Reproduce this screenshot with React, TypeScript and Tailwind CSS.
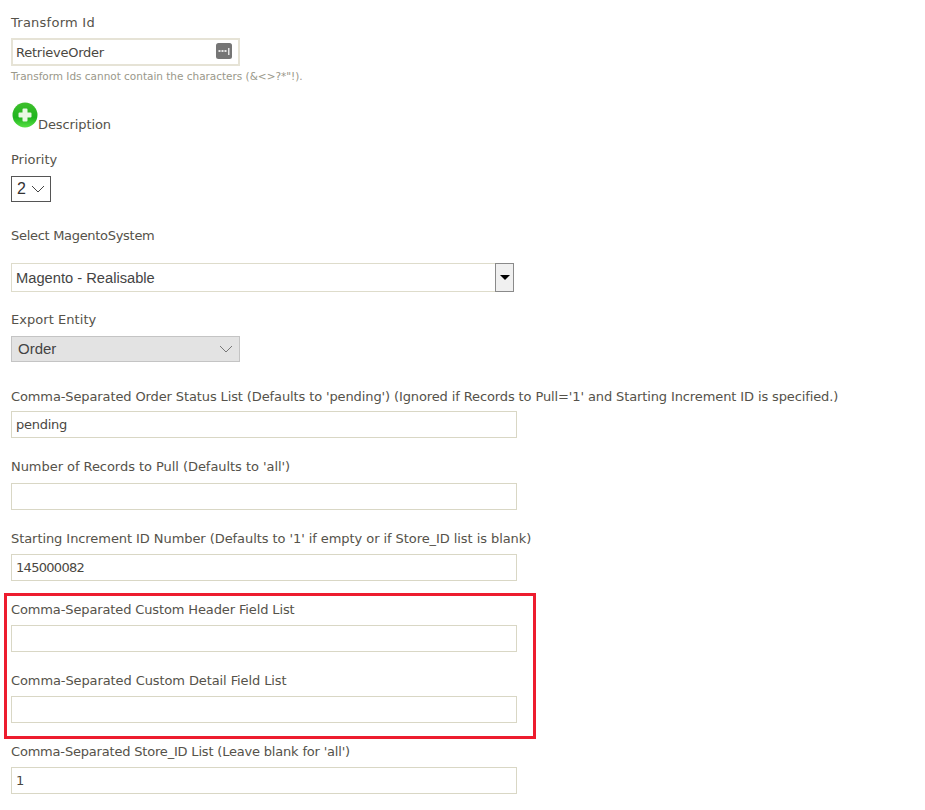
const FONT = "font-['DejaVu_Sans',sans-serif]"

function Label({ children, className = '' }: { children: React.ReactNode; className?: string }) {
  return <div className={`h-5 text-[13px] leading-5 text-[#55524a] whitespace-nowrap ${className}`}>{children}</div>
}

function TextField({ label, value = '', className = '', labelClass = '', inputClass = 'mt-[5px]', valueClass = 'tracking-[-0.25px]' }: { label: string; value?: string; className?: string; labelClass?: string; inputClass?: string; valueClass?: string }) {
  return (
    <div className={className}>
      <Label className={labelClass}>{label}</Label>
      <input
        readOnly
        value={value}
        className={`${inputClass} ${valueClass} block h-[27px] w-[506px] border border-[#d9d7c5] bg-white px-[4px] text-[13px] text-[#4a473f] outline-none`}
      />
    </div>
  )
}

function PlusIcon() {
  return (
    <svg width="26" height="26" viewBox="0 0 26 26" className="shrink-0 self-start">
      <defs>
        <linearGradient id="plusGreen" x1="0" y1="0" x2="0" y2="1">
          <stop offset="0" stopColor="#3fbf2c" />
          <stop offset="0.6" stopColor="#1fb51f" />
          <stop offset="1" stopColor="#57e043" />
        </linearGradient>
      </defs>
      <circle cx="13" cy="13" r="12.5" fill="url(#plusGreen)" />
      <path d="M10.5 7.5a1 1 0 011-1h3a1 1 0 011 1v3h3a1 1 0 011 1v3a1 1 0 01-1 1h-3v3a1 1 0 01-1 1h-3a1 1 0 01-1-1v-3h-3a1 1 0 01-1-1v-3a1 1 0 011-1h3z" fill="#e9f8e4" />
    </svg>
  )
}

function DotsIcon() {
  return (
    <svg width="16" height="16" viewBox="0 0 16 16" className="absolute right-[6px] top-[3px]">
      <rect width="16" height="16" rx="2.5" fill="#757575" />
      <rect x="2.5" y="7" width="2" height="2" fill="#e4e4e4" />
      <rect x="5.5" y="7" width="2" height="2" fill="#e4e4e4" />
      <rect x="8.5" y="7" width="2" height="2" fill="#e4e4e4" />
      <rect x="12" y="5" width="1.5" height="7" fill="#e4e4e4" />
    </svg>
  )
}

function Chevron({ color }: { color: string }) {
  return (
    <svg width="14" height="8" viewBox="0 0 14 8" fill="none">
      <path d="M1 1l6 6 6-6" stroke={color} strokeWidth="1" />
    </svg>
  )
}

export default function App() {
  return (
    <div className={`${FONT} min-h-[810px] w-[925px] overflow-hidden bg-white pl-[11px] pt-[13px]`}>
      <Label className="tracking-[0.25px]">Transform Id</Label>
      <div className="relative mt-[5px] h-[28px] w-[229px] border-2 border-[#e6e3d6] bg-white pl-[3px] text-[13px] leading-[25px] tracking-[-0.25px] text-[#4a473f]">
        RetrieveOrder
        <DotsIcon />
      </div>
      <div className="mt-[4px] h-[12px] text-[10.5px] leading-[12px] tracking-[-0.02px] text-[#9a988a]">
        Transform Ids cannot contain the characters (&amp;&lt;&gt;?*"!).
      </div>

      <div className="mt-[20px] flex h-[30px] items-end pl-px">
        <PlusIcon />
        <span className="text-[13px] leading-[14px] tracking-[-0.1px] text-[#55524a]">Description</span>
      </div>

      <Label className="mt-[18px]">Priority</Label>
      <div className="mt-[6px] flex h-[26px] w-[40px] items-center gap-[5px] border border-[#555] pl-[5px] font-['Liberation_Sans',sans-serif] text-[16px] text-[#333]">
        2
        <Chevron color="#444" />
      </div>

      <Label className="mt-[24px] tracking-[-0.3px]">Select MagentoSystem</Label>
      <div className="mt-[17px] flex h-[29px] w-[503px] border border-[#dedccb] bg-white">
        <div className="flex-1 pl-[4px] font-['Liberation_Sans',sans-serif] text-[14.7px] leading-[28px] text-[#444]">Magento - Realisable</div>
        <div className="-my-px -mr-px flex h-[29px] w-[19px] items-center justify-center border border-[#8a8a8a] bg-[#f0f0f0]">
          <div className="h-0 w-0 border-x-[5px] border-t-[5px] border-x-transparent border-t-black" />
        </div>
      </div>

      <Label className="mt-[18px] tracking-[0.05px]">Export Entity</Label>
      <div className="mt-[6px] flex h-[26px] w-[229px] items-center justify-between border border-[#c4c4c4] bg-[#e3e3e3] pl-[6px] pr-[6px] font-['Liberation_Sans',sans-serif] text-[15px] text-[#444]">
        Order
        <Chevron color="#777" />
      </div>

      <TextField className="mt-[25px]" labelClass="tracking-[-0.115px]" inputClass="mt-[4px]" label="Comma-Separated Order Status List (Defaults to 'pending') (Ignored if Records to Pull='1' and Starting Increment ID is specified.)" value="pending" />
      <TextField className="mt-[19px]" labelClass="tracking-[-0.05px]" inputClass="mt-[6px]" label="Number of Records to Pull (Defaults to 'all')" />
      <TextField className="mt-[19px]" labelClass="tracking-[-0.07px]" valueClass="tracking-[-0.7px]" label="Starting Increment ID Number (Defaults to '1' if empty or if Store_ID list is blank)" value="145000082" />

      <div className="-ml-[7px] mt-[12px] h-[146px] w-[532px] border-[3px] border-[#ed1c2e] pl-[4px] pt-[4px]">
        <TextField labelClass="tracking-[-0.125px]" label="Comma-Separated Custom Header Field List" />
        <TextField className="mt-[19px]" labelClass="tracking-[-0.1px]" label="Comma-Separated Custom Detail Field List" />
      </div>

      <TextField className="mt-[3px]" labelClass="tracking-[-0.19px]" label="Comma-Separated Store_ID List (Leave blank for 'all')" value="1" />
    </div>
  )
}
